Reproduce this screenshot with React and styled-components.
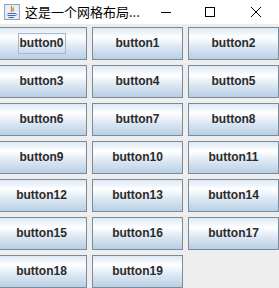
import React from "react";
import styled, { createGlobalStyle } from "styled-components";

const Global = createGlobalStyle`
  html, body { margin: 0; padding: 0; background: #eeeeee; overflow: hidden; }
  #root { width: 279px; height: 288px; }
`;

const Window = styled.div`
  width: 279px;
  height: 288px;
  background: #eeeeee;
  display: flex;
  flex-direction: column;
  overflow: hidden;
`;

const TitleBar = styled.div`
  height: 24px;
  flex: none;
  background: #ffffff;
  display: flex;
  align-items: center;
  font-family: "Noto Sans CJK SC", "Noto Sans", sans-serif;
  font-size: 13px;
  color: #000;
`;

const AppIcon = styled.svg`
  width: 16px;
  height: 16px;
  margin-left: 4px;
  margin-right: 5px;
  flex: none;
`;

const Title = styled.span`
  flex: 1;
  white-space: nowrap;
  line-height: 24px;
`;

const Ctrl = styled.div`
  width: ${(p) => p.$w}px;
  height: 24px;
  display: flex;
  align-items: center;
  justify-content: center;
  flex: none;
`;

const Grid = styled.div`
  margin-top: 3px;
  margin-left: -4px;
  display: grid;
  grid-template-columns: repeat(3, 91px);
  grid-auto-rows: 33px;
  column-gap: 5px;
  row-gap: 5px;
`;

const Button = styled.div`
  box-sizing: border-box;
  border: 1px solid #7a8a99;
  background: linear-gradient(
    to bottom,
    #dde8f3 0%,
    #ffffff 30%,
    #dde8f3 60%,
    #b8cfe5 100%
  );
  display: flex;
  align-items: center;
  justify-content: center;
  font-family: "Liberation Sans", Arial, sans-serif;
  font-weight: bold;
  font-size: 12px;
  color: #2a2a2a;
`;

const Label = styled.span`
  box-sizing: border-box;
  padding: 1px 1px;
  line-height: 17px;
  border: 1px solid ${(p) => (p.$focus ? "#a3b8cc" : "transparent")};
`;

export default function App() {
  const items = Array.from({ length: 20 }, (_, i) => `button${i}`);
  return (
    <Window>
      <Global />
      <TitleBar>
        <AppIcon viewBox="0 0 16 16">
          <rect x="0.5" y="0.5" width="15" height="15" fill="#e8eef6" stroke="#8fa3bf" />
          <path d="M8 2 C6 4 9 5 7 8 M9.5 3.5 C8.5 5 10 6 9 7.5" stroke="#e87a1e" strokeWidth="1.2" fill="none" />
          <path d="M3.5 9.5 H11 M3.5 11.5 H11 M4.5 13.5 H10" stroke="#3a6ab0" strokeWidth="1.1" />
          <path d="M11 9.5 C13 9.5 13 11.5 11 11.5" stroke="#3a6ab0" strokeWidth="1" fill="none" />
        </AppIcon>
        <Title>这是一个网格布局...</Title>
        <Ctrl $w={42}>
          <svg width="12" height="12" viewBox="0 0 12 12">
            <path d="M1 6.5 H11" stroke="#000" strokeWidth="1" />
          </svg>
        </Ctrl>
        <Ctrl $w={46}>
          <svg width="12" height="12" viewBox="0 0 12 12">
            <rect x="1.5" y="1.5" width="9" height="9" fill="none" stroke="#000" strokeWidth="1" />
          </svg>
        </Ctrl>
        <Ctrl $w={46}>
          <svg width="12" height="12" viewBox="0 0 12 12">
            <path d="M1 1 L11 11 M11 1 L1 11" stroke="#000" strokeWidth="1" />
          </svg>
        </Ctrl>
      </TitleBar>
      <Grid>
        {items.map((t, i) => (
          <Button key={t}>
            <Label $focus={i === 0}>{t}</Label>
          </Button>
        ))}
      </Grid>
    </Window>
  );
}
